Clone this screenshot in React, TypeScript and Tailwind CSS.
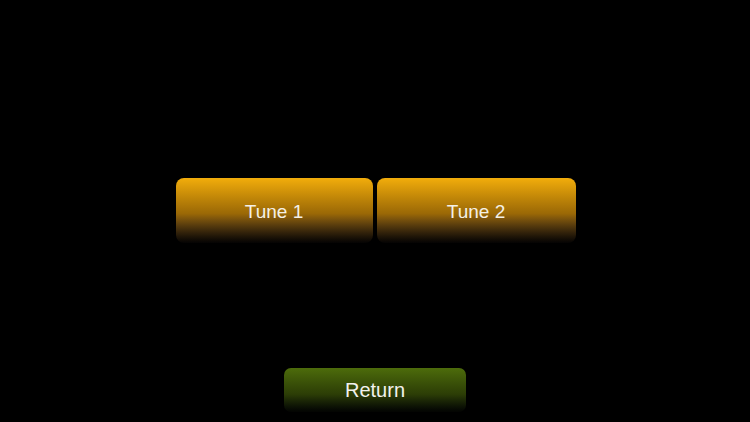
export default function App() {
  return (
    <div className="flex h-[422px] w-[750px] flex-col items-center bg-black font-['Liberation_Sans',Arial,sans-serif] text-white">
      <div className="mt-[178px] flex gap-[4px] pl-[1px]">
        <button className="h-[65px] w-[197px] rounded-[8px] bg-linear-to-b from-[#f2ad0b] via-[#9a6806] via-55% to-[#050403] pt-[3px] text-[19px] text-[#f4f0e6]">
          Tune 1
        </button>
        <button className="h-[65px] w-[199px] rounded-[8px] bg-linear-to-b from-[#f2ad0b] via-[#9a6806] via-55% to-[#050403] pt-[3px] text-[19px] text-[#f4f0e6]">
          Tune 2
        </button>
      </div>
      <button className="mt-[125px] h-[44px] w-[182px] rounded-[7px] bg-linear-to-b from-[#4d6c0b] via-[#2c3d06] via-60% to-[#030402] text-[20px] text-[#f2f2ee]">
        Return
      </button>
    </div>
  );
}
